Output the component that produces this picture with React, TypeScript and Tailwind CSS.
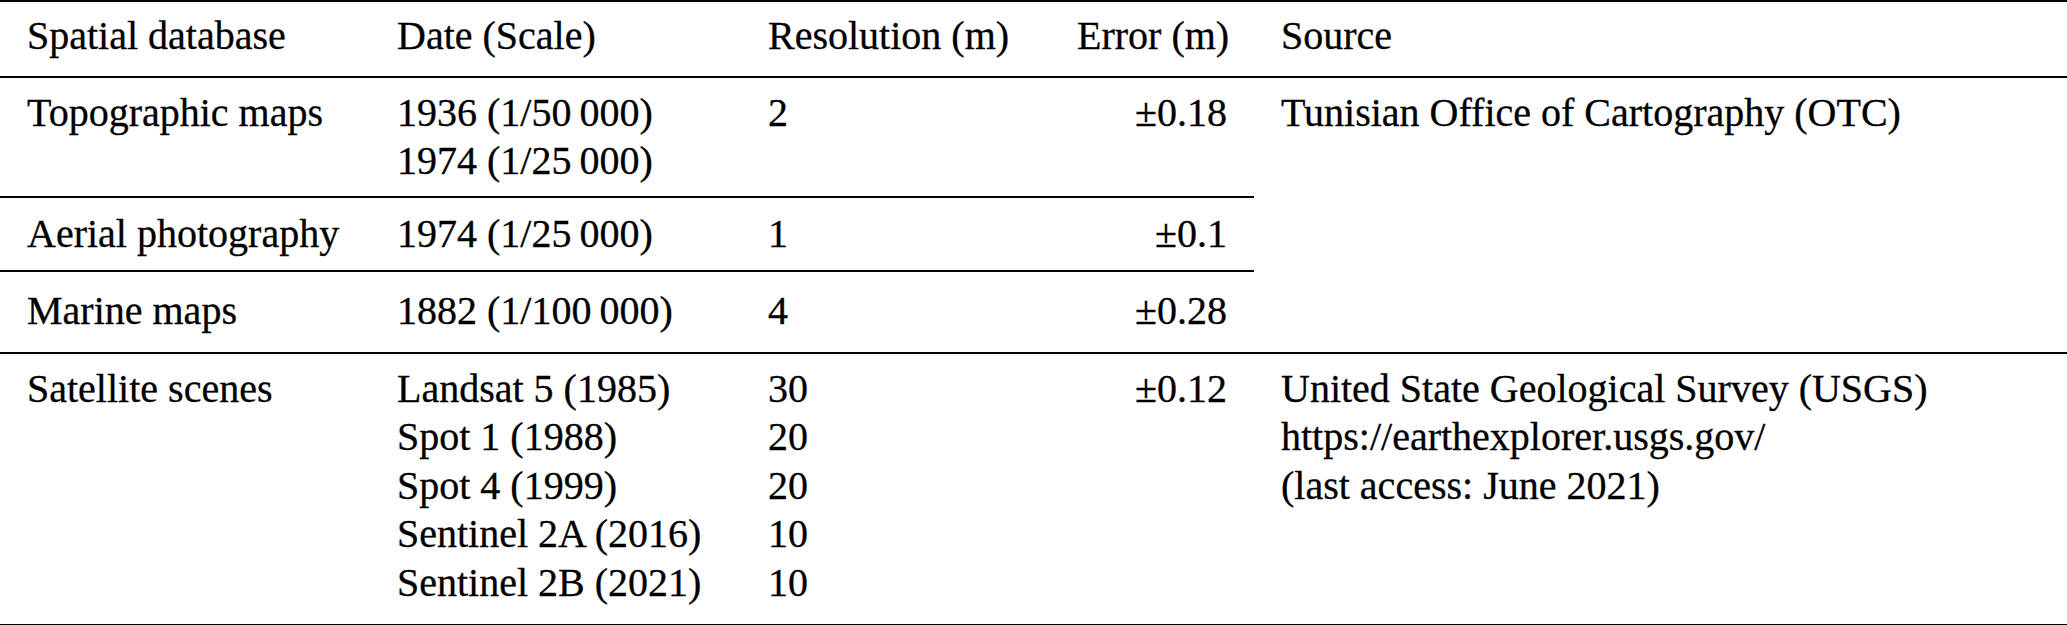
import React from "react";

const cell = "px-[27px] border-black";

export default function App() {
  return (
    <div className="w-[2067px] h-[625px] bg-white text-black font-['Liberation_Serif','Times_New_Roman',serif] text-[40px] leading-[48.5px] [-webkit-text-stroke:0.3px_black]">
      <div className="grid grid-cols-[370px_371px_309px_204px_1fr] border-t-2 border-black">
        {/* Header */}
        <div className={`${cell} pt-[10px] pb-[15px] border-b-2`}>Spatial database</div>
        <div className={`${cell} pt-[10px] pb-[15px] border-b-2`}>Date (Scale)</div>
        <div className={`${cell} pt-[10px] pb-[15px] border-b-2 whitespace-nowrap`}>Resolution (m)</div>
        <div className={`${cell} pt-[10px] pb-[15px] border-b-2 text-right whitespace-nowrap`}>Error (m)</div>
        <div className={`${cell} pt-[10px] pb-[15px] border-b-2`}>Source</div>

        {/* Row 1 */}
        <div className={`${cell} pt-[11px] pb-[10px] border-b-2`}>Topographic maps</div>
        <div className={`${cell} pt-[11px] pb-[10px] border-b-2 whitespace-nowrap`}>
          <div>1936 (1/50{"\u2009"}000)</div>
          <div>1974 (1/25{"\u2009"}000)</div>
        </div>
        <div className={`${cell} pt-[11px] pb-[10px] border-b-2`}>2</div>
        <div className={`${cell} pt-[11px] pb-[10px] border-b-2 text-right`}>±0.18</div>
        <div className={`${cell} pt-[11px] border-b-2 row-span-3`}>Tunisian Office of Cartography (OTC)</div>

        {/* Row 2 */}
        <div className={`${cell} pt-[12px] pb-[12px] border-b-2 whitespace-nowrap`}>Aerial photography</div>
        <div className={`${cell} pt-[12px] pb-[12px] border-b-2 whitespace-nowrap`}>1974 (1/25{"\u2009"}000)</div>
        <div className={`${cell} pt-[12px] pb-[12px] border-b-2`}>1</div>
        <div className={`${cell} pt-[12px] pb-[12px] border-b-2 text-right`}>±0.1</div>

        {/* Row 3 */}
        <div className={`${cell} pt-[15px] pb-[16px] border-b-2`}>Marine maps</div>
        <div className={`${cell} pt-[15px] pb-[16px] border-b-2 whitespace-nowrap`}>1882 (1/100{"\u2009"}000)</div>
        <div className={`${cell} pt-[15px] pb-[16px] border-b-2`}>4</div>
        <div className={`${cell} pt-[15px] pb-[16px] border-b-2 text-right`}>±0.28</div>

        {/* Row 4 */}
        <div className={`${cell} pt-[11px] pb-[17px] border-b-2`}>Satellite scenes</div>
        <div className={`${cell} pt-[11px] pb-[17px] border-b-2 whitespace-nowrap`}>
          <div>Landsat 5 (1985)</div>
          <div>Spot 1 (1988)</div>
          <div>Spot 4 (1999)</div>
          <div>Sentinel 2A (2016)</div>
          <div>Sentinel 2B (2021)</div>
        </div>
        <div className={`${cell} pt-[11px] pb-[17px] border-b-2`}>
          <div>30</div>
          <div>20</div>
          <div>20</div>
          <div>10</div>
          <div>10</div>
        </div>
        <div className={`${cell} pt-[11px] pb-[17px] border-b-2 text-right`}>±0.12</div>
        <div className={`${cell} pt-[11px] pb-[17px] border-b-2 whitespace-nowrap`}>
          <div>United State Geological Survey (USGS)</div>
          <div>https://earthexplorer.usgs.gov/</div>
          <div>(last access: June 2021)</div>
        </div>
      </div>
    </div>
  );
}
